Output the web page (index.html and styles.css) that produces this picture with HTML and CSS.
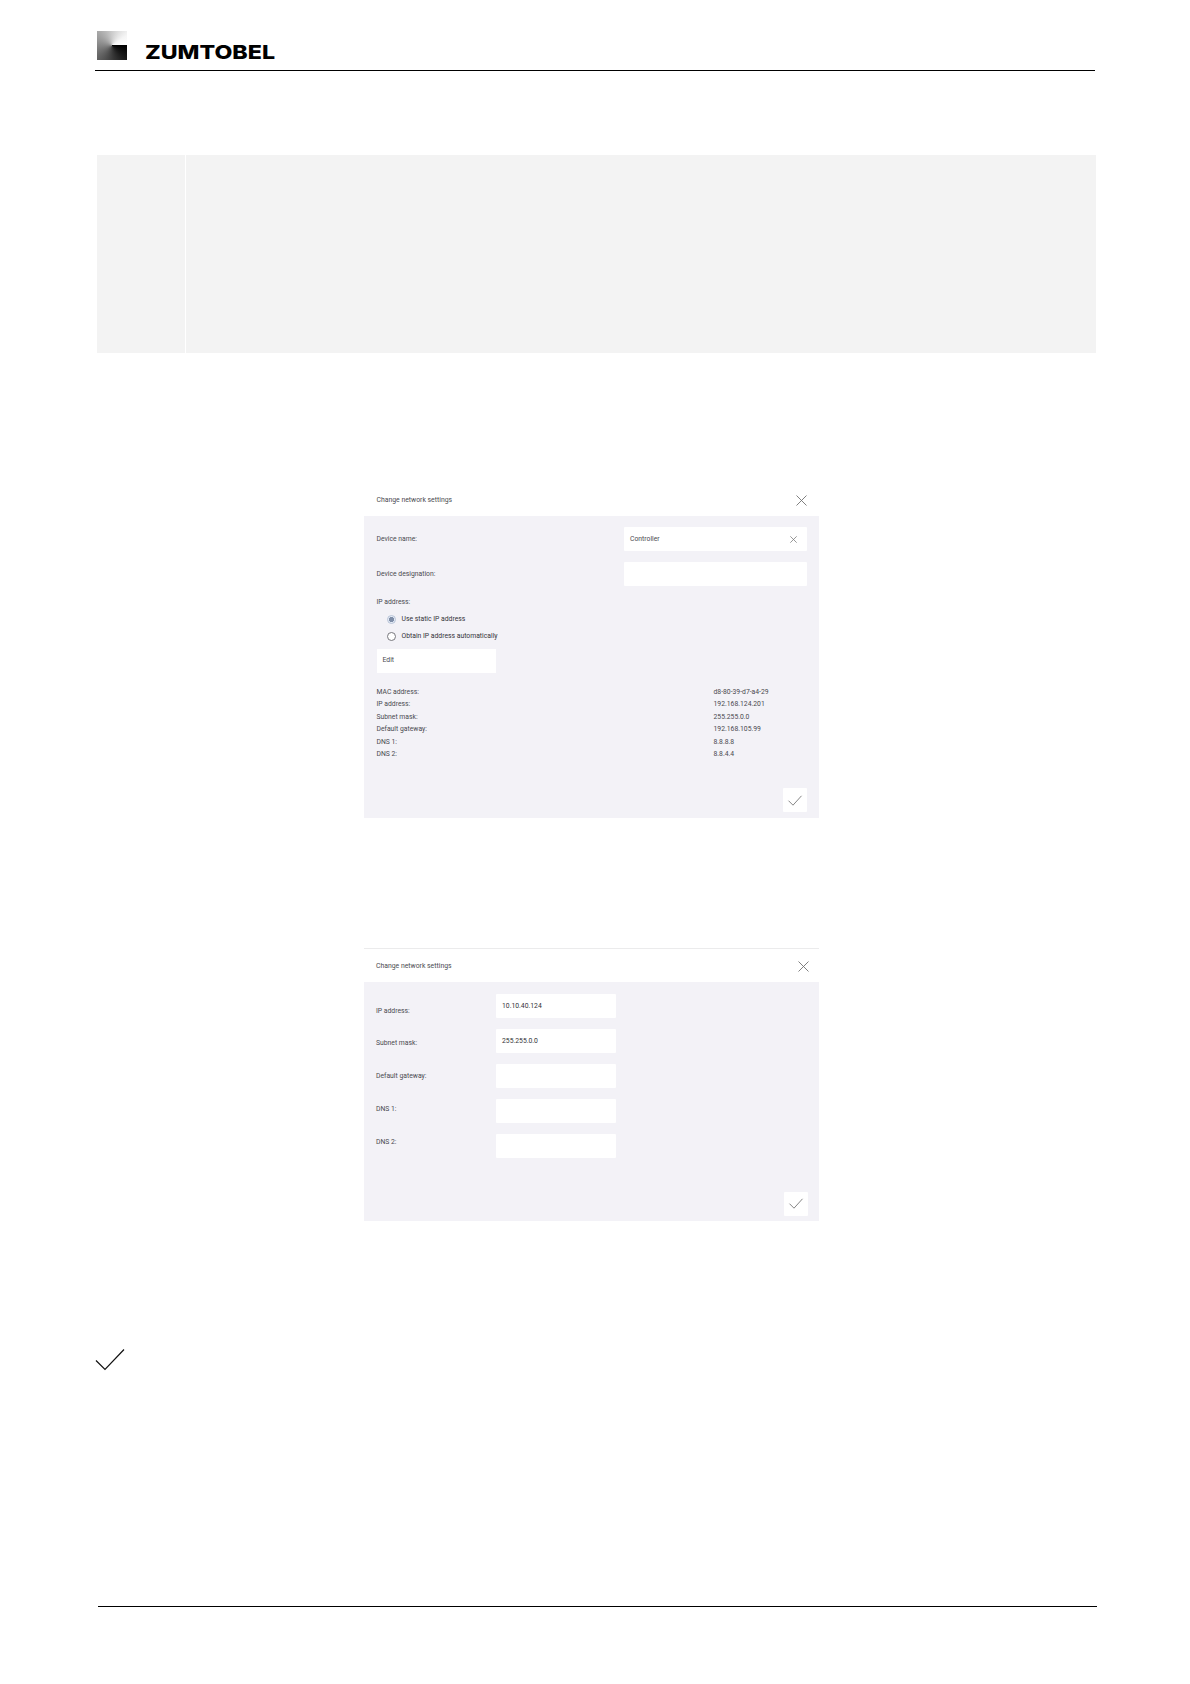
FILE: index.html
```html
<!DOCTYPE html>
<html lang="en">
<head>
<meta charset="utf-8">
<title>Zumtobel – Change network settings</title>
<link rel="stylesheet" href="styles.css">
</head>
<body>
<header class="page-header">
  <div class="logo-mark"></div>
  <svg class="wordmark" width="136" height="26" viewBox="0 0 136 26"><text x="0" y="21" textLength="130" lengthAdjust="spacingAndGlyphs">ZUMTOBEL</text></svg>
</header>

<section class="note"><div class="note-icon"></div><div class="note-body"></div></section>

<section class="dialog device">
  <header class="dialog-header">
    <h2>Change network settings</h2>
    <svg class="close" viewBox="0 0 11 11"><path d="M.5.5l10 10M10.500.5l-10 10"/></svg>
  </header>
  <div class="dialog-body">
    <div class="field"><span>Device name:</span>
      <div class="input wide">Controller<svg class="clear" viewBox="0 0 11 11"><path d="M.5.5l10 10M10.500.5l-10 10"/></svg></div>
    </div>
    <div class="field"><span>Device designation:</span><div class="input wide"></div></div>
    <div class="group-label">IP address:</div>
    <div class="option"><i class="radio selected"></i><span>Use static IP address</span></div>
    <div class="option"><i class="radio"></i><span>Obtain IP address automatically</span></div>
    <div class="edit">Edit</div>
    <dl class="details">
      <dt>MAC address:</dt><dd>d8-80-39-d7-a4-29</dd>
      <dt>IP address:</dt><dd>192.168.124.201</dd>
      <dt>Subnet mask:</dt><dd>255.255.0.0</dd>
      <dt>Default gateway:</dt><dd>192.168.105.99</dd>
      <dt>DNS 1:</dt><dd>8.8.8.8</dd>
      <dt>DNS 2:</dt><dd>8.8.4.4</dd>
    </dl>
    <div class="confirm"><svg viewBox="0 0 14 11"><path d="M.5 5.700L5 10.200 13.500.8"/></svg></div>
  </div>
</section>

<section class="dialog address">
  <header class="dialog-header">
    <h2>Change network settings</h2>
    <svg class="close" viewBox="0 0 11 11"><path d="M.5.5l10 10M10.500.5l-10 10"/></svg>
  </header>
  <div class="dialog-body">
    <div class="form">
      <div class="labels"><span>IP address:</span><span>Subnet mask:</span><span>Default gateway:</span><span>DNS 1:</span><span>DNS 2:</span></div>
      <div class="inputs">
        <div class="input">10.10.40.124</div>
        <div class="input">255.255.0.0</div>
        <div class="input"></div>
        <div class="input"></div>
        <div class="input"></div>
      </div>
    </div>
    <div class="confirm"><svg viewBox="0 0 14 11"><path d="M.5 5.700L5 10.200 13.500.8"/></svg></div>
  </div>
</section>

<svg class="page-check" viewBox="0 0 30 23"><path d="M1 11.500L10 20.500 29 .5"/></svg>
<footer class="page-footer"></footer>
</body>
</html>
```
FILE: styles.css
```css
* { box-sizing: border-box; }

body {
  margin: 0;
  width: 1190px;
  height: 1684px;
  background: #fff;
  color: #4a4a50;
  font: 6.8px/12px Roboto, sans-serif;
  display: flex;
  flex-direction: column;
  align-items: flex-start;
}

svg { display: block; fill: none; overflow: visible; }

.page-header {
  width: 1000px;
  height: 71px;
  margin-left: 95px;
  padding: 31px 0 0 1.500px;
  border-bottom: 1px solid #000;
  display: flex;
  gap: 18.500px;
}
.logo-mark {
  width: 30px;
  height: 29px;
  background: conic-gradient(from 90deg at 50% 50%, #000 0deg, #1a1a1a 45deg, #3c3c3c 90deg, #606060 135deg, #858585 180deg, #a8a8a8 225deg, #d0d0d0 275deg, #f5f5f5 325deg, #fff 360deg);
}
.wordmark { margin-top: 6.500px; }
.wordmark text { font: 800 19.300px/24px Inter, sans-serif; fill: #000; }

.note {
  width: 999px;
  height: 198px;
  margin: 84px 0 0 97px;
  display: flex;
  gap: 1px;
}
.note-icon { width: 88px; background: #f3f3f3; }
.note-body { flex: 1; background: #f3f3f3; }

.dialog { width: 455px; margin-left: 364px; }
.dialog-header {
  padding: 0 12px;
  display: flex;
  justify-content: space-between;
  align-items: center;
}
h2 { margin: 0; font-size: 6.850px; font-weight: 400; }
.close { width: 11px; height: 11px; margin-top: 1px; stroke: #727272; stroke-width: .9; }
.dialog-body { background: #f3f2f7; }
.input {
  width: 120px;
  height: 24px;
  padding: 0 6px;
  background: #fff;
  border-radius: 1px;
  display: flex;
  align-items: center;
}

.device { margin-top: 130px; }
.device .dialog-header { height: 33px; padding-left: 12.500px; }
.device .dialog-body {
  height: 302px;
  padding: 11px 12.500px 0 12.500px;
  display: flex;
  flex-direction: column;
}
.field {
  height: 24px;
  margin-bottom: 11px;
  display: flex;
  justify-content: space-between;
  align-items: center;
}
.device .wide { width: 182.500px; justify-content: space-between; }
.clear { width: 7px; height: 7px; margin-right: 4px; stroke: #777; stroke-width: 1.200; }
.group-label { height: 12px; margin: -1px 0 2.500px; }
.option {
  height: 17px;
  padding-left: 10px;
  color: #333339;
  display: flex;
  align-items: center;
  gap: 6px;
}
.radio {
  width: 9px;
  height: 9px;
  margin-top: 1px;
  border: 1px solid #77777d;
  border-radius: 50%;
  background: #fff;
}
.selected {
  border-color: #b8c4d8;
  background: radial-gradient(circle, #7f8ea8 0 2.300px, #e7edf7 2.900px);
}
.edit {
  width: 119px;
  height: 24px;
  margin-top: 4px;
  padding-left: 6px;
  background: #fff;
  line-height: 23px;
}
.details {
  margin: 13px 0 0;
  display: grid;
  grid-template-columns: 337px 1fr;
  grid-auto-rows: 12.500px;
}
.details dd { margin: 0; }
.confirm {
  width: 24px;
  height: 24px;
  background: #fff;
  border-radius: 1px;
  display: grid;
  place-items: center;
}
.confirm svg { width: 14px; height: 11px; stroke: #777; stroke-width: .9; }
.device .confirm { margin: auto 0 6px auto; }

.address { margin-top: 130px; }
.address .dialog-header { height: 34px; border-top: 1px solid #ebebec; padding-right: 10px; }
.address .dialog-body {
  height: 239px;
  padding: 12px 11px 5px 12px;
  display: flex;
  flex-direction: column;
  justify-content: space-between;
}
.form { display: flex; }
.labels {
  width: 120px;
  padding-top: 10.500px;
  display: flex;
  flex-direction: column;
  gap: 20.750px;
}
.inputs { display: flex; flex-direction: column; gap: 11px; color: #333339; }
.address .confirm { align-self: flex-end; }
.address .confirm svg { margin-bottom: 1px; }

.page-check {
  width: 30px;
  height: 23px;
  margin: 128px 0 0 95px;
  stroke: #111;
  stroke-width: 1.200;
}
.page-footer {
  width: 999px;
  height: 1px;
  margin: 234px 0 0 98px;
  background: #000;
}
```
